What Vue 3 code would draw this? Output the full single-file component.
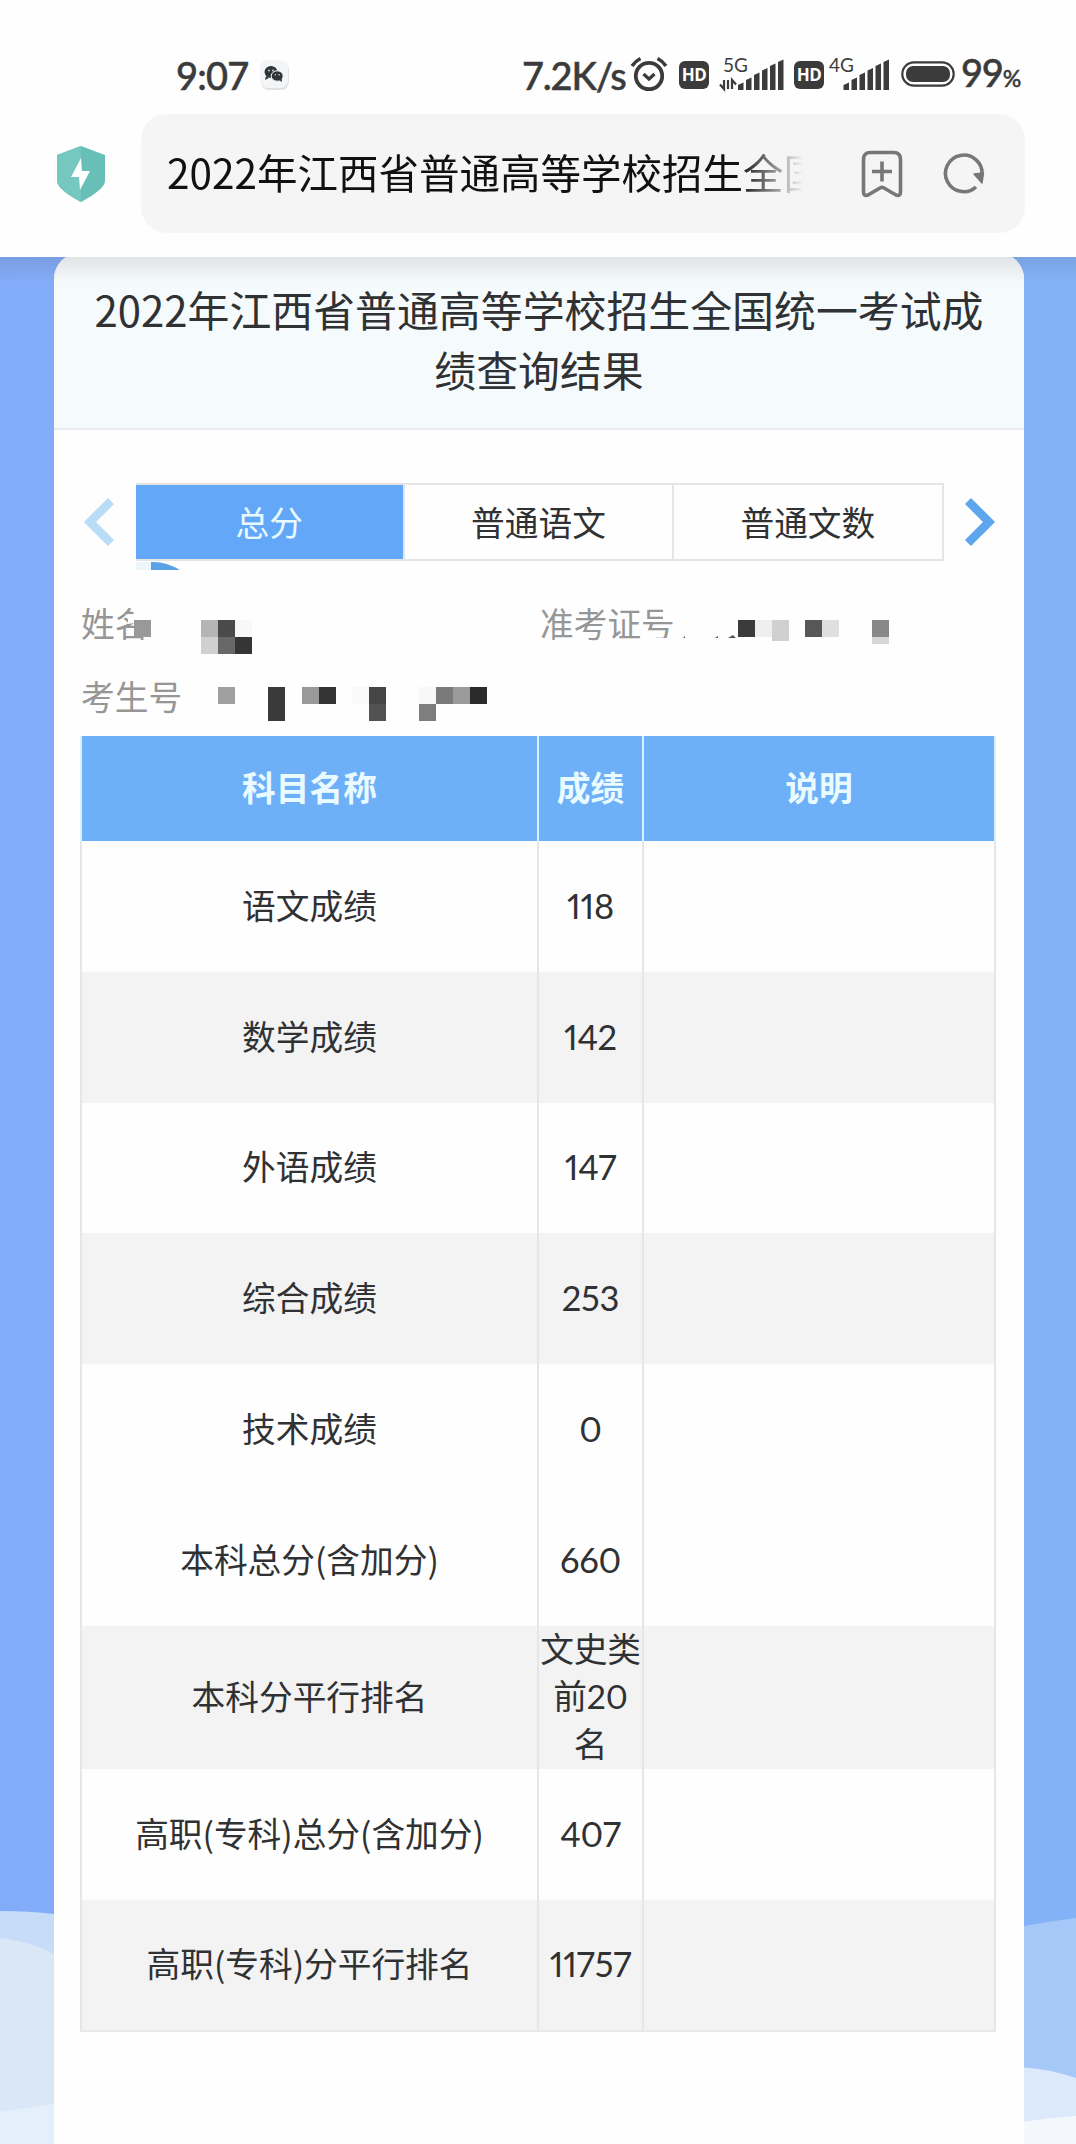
<template>
  <div class="screen">
    <header class="browser">
      <div class="status-bar">
        <span class="time">9:07</span>
        <svg class="wechat" viewBox="0 0 30 31">
          <rect x="1" y="2" width="28" height="28" rx="8" fill="#dfe3e7" />
          <rect x="0" y="0" width="28" height="28" rx="8" fill="#f3f5f7" />
          <ellipse cx="11" cy="12" rx="6.5" ry="6" fill="#2f3437" />
          <path d="M6 16l-1 4 4-2z" fill="#2f3437" />
          <ellipse cx="17.2" cy="16" rx="6" ry="5.2" fill="#2f3437" stroke="#f3f5f7" stroke-width="1" />
          <path d="M19 20l3 2-.5-4z" fill="#2f3437" />
          <circle cx="9" cy="10.5" r=".9" fill="#d5d8da" />
          <circle cx="13" cy="10.5" r=".9" fill="#d5d8da" />
          <circle cx="15.4" cy="14.8" r=".8" fill="#d5d8da" />
          <circle cx="19.2" cy="14.8" r=".8" fill="#d5d8da" />
        </svg>
        <span class="speed">7.2K/s</span>
        <svg class="alarm" viewBox="0 0 38 36" fill="none" stroke="#3b3b3b">
          <circle cx="19" cy="20" r="13.2" stroke-width="3.8" />
          <path d="M13.5 18l5.5 5 5.5-5" stroke-width="3.2" />
          <path d="M2 10q3.5-5 8.5-7.5M36 10q-3.5-5-8.5-7.5" stroke-width="3.6" />
        </svg>
        <span class="hd">HD</span>
        <svg class="signal signal-5g" viewBox="0 0 64 34">
          <text x="3" y="16" class="net">5G</text>
          <path d="M4 24v9l-4-4.500M8 24v9M12 33v-9l4 4.500" fill="none" stroke="#3b3b3b" stroke-width="2.200" />
          <path v-for="(bar, i) in bars" :key="i" :d="bar" transform="translate(18 0)" fill="#3b3b3b" />
        </svg>
        <span class="hd hd-second">HD</span>
        <svg class="signal signal-4g" viewBox="0 0 61 34">
          <text x="0" y="16" class="net">4G</text>
          <path v-for="(bar, i) in bars" :key="i" :d="bar" transform="translate(14.5 0)" fill="#3b3b3b" />
        </svg>
        <svg class="battery" viewBox="0 0 54 26">
          <rect x="1.3" y="1.3" width="51.4" height="23.4" rx="11.7" fill="none" stroke="#3b3b3b" stroke-width="2.2" />
          <rect x="5" y="5" width="44" height="16" rx="7" fill="#3b3b3b" />
        </svg>
        <span class="level">99<small>%</small></span>
      </div>

      <div class="toolbar">
        <svg class="shield" viewBox="0 0 50 58">
          <path d="M25 1l24 9v26q0 8-24 21Q1 44 1 36V10z" fill="#67bfb7" />
          <path d="M25 1L1 10v26q0 8 24 21z" fill="#76c7bf" />
          <path d="M25 13L15 32h8l1 13 10-19h-8z" fill="#fff" />
        </svg>
        <div class="address">
          <span class="address-text">2022年江西省普通高等学校招生全国</span>
          <svg class="bookmark" viewBox="0 0 42 48" fill="none" stroke="#777" stroke-width="3.6">
            <path d="M9.500 2.500h23q7 0 7 7v32.500q0 4.500-4.500 3L23 38q-2-1.200-4 0L7 45q-4.500 1.500-4.500-3V9.500q0-7 7-7z" stroke-linejoin="round" />
            <path d="M21 11.500v20M11 21.500h20" />
          </svg>
          <svg class="refresh" viewBox="0 0 44 44">
            <path d="M34 35A18.300 18.300 0 1 1 40 23" fill="none" stroke="#777" stroke-width="3.6" />
            <path d="M32 22l9.500-1-1.500 10z" fill="#777" stroke="#777" stroke-width="1.5" stroke-linejoin="round" />
          </svg>
        </div>
      </div>
    </header>

    <main class="content">
      <svg class="clouds" viewBox="0 0 1076 244">
        <path d="M0 11Q30 11 54 14V244H0z" fill="#c6dcf9" />
        <path d="M0 38Q30 41 54 54V244H0z" fill="#dae7f7" />
        <path d="M0 212Q22 208 54 204V244H0z" fill="#e3effa" />
        <path d="M1020 27Q1050 21 1076 18V244H1020z" fill="#a6c8f8" />
        <path d="M1020 167Q1050 169 1076 178V244H1020z" fill="#dce9fb" />
        <path d="M1020 222Q1050 218 1076 216V244H1020z" fill="#f4f8fc" />
      </svg>

      <section class="card">
        <h1 class="title">2022年江西省普通高等学校招生全国统一考试成<br>绩查询结果</h1>

        <nav class="tabs">
          <svg class="arrow" viewBox="0 0 32 50">
            <path d="M28 4L7 25l21 21" fill="none" stroke="#b9dcf7" stroke-width="8.5" />
          </svg>
          <ul class="tab-list">
            <li
              v-for="(tab, i) in tabs"
              :key="tab"
              class="tab"
              :class="{ active: i === current }"
              @click="current = i"
            >{{ tab }}</li>
          </ul>
          <svg class="arrow" viewBox="0 0 32 50">
            <path d="M4 4l21 21L4 46" fill="none" stroke="#5da5ec" stroke-width="8.5" />
          </svg>
        </nav>

        <div class="info">
          <span>姓名</span>
          <span>准考证号</span>
          <span>考生号</span>
          <!-- private values are covered by a mosaic -->
          <svg class="mosaic" viewBox="0 0 970 180">
            <path d="M82 3h15v8H82z" fill="#ebf7fd" />
            <path d="M97 3q14-1 29 8H97z" fill="#5ba2e6" />
            <path d="M76 46h24v34l-6-1-2-2-12-1V64l-6 1v-6l6-4z" fill="#fefefe" />
            <path d="M609 49h14v14h-14zM586 79h50v12h-50z" fill="#fefefe" />
            <rect v-for="(b, i) in blocks" :key="i" :x="b[0]" :y="b[1]" width="17" :height="b[3] || 17" :fill="b[2]" />
            <path d="M629 79h2v-2zM661 79l3-2v2zM674 79l5-3 3 3z" fill="#555" />
          </svg>
        </div>

        <table class="scores">
          <colgroup>
            <col class="col-name">
            <col class="col-score">
            <col class="col-note">
          </colgroup>
          <thead>
            <tr>
              <th>科目名称</th>
              <th>成绩</th>
              <th>说明</th>
            </tr>
          </thead>
          <tbody>
            <tr v-for="row in rows" :key="row.name" :class="{ striped: row.striped, tall: row.tall }">
              <td>{{ row.name }}</td>
              <td class="score">{{ row.score }}</td>
              <td></td>
            </tr>
          </tbody>
        </table>
      </section>
    </main>
  </div>
</template>

<script setup>
import { ref } from 'vue';

const current = ref(0);
const tabs = ['总分', '普通语文', '普通文数'];

const rows = [
  { name: '语文成绩', score: '118' },
  { name: '数学成绩', score: '142', striped: true },
  { name: '外语成绩', score: '147' },
  { name: '综合成绩', score: '253', striped: true },
  { name: '技术成绩', score: '0' },
  { name: '本科总分(含加分)', score: '660' },
  { name: '本科分平行排名', score: '文史类前20名', striped: true, tall: true },
  { name: '高职(专科)总分(含加分)', score: '407' },
  { name: '高职(专科)分平行排名', score: '11757', striped: true }
];

// signal bars, each with a slanted top
const bars = [27, 22, 17, 12.5, 8, 4].map((top, i) => {
  const x = i * 8;
  return `M${x} ${top + 2}l5.5-2.5V34H${x}z`;
});

// x, y, colour, height
const blocks = [
  [80, 61, '#999'],
  [147, 61, '#b5b5b5'], [164, 61, '#4a4a4a'], [181, 61, '#f8f8f8'],
  [147, 78, '#d0d0d0'], [164, 78, '#686868'], [181, 78, '#353535'],
  [164, 128, '#a0a0a0'], [214, 128, '#3a3a3a', 34],
  [248, 128, '#999'], [265, 128, '#333'],
  [298, 128, '#f9f9f9'], [315, 128, '#454545'], [315, 145, '#525252'],
  [365, 128, '#f8f8f8'], [382, 128, '#7a7a7a'], [399, 128, '#9b9b9b'], [416, 128, '#2b2b2b'],
  [365, 145, '#7e7e7e'],
  [684, 61, '#3b3b3b'], [701, 61, '#efefef'], [718, 61, '#d0d0d0', 21],
  [751, 61, '#575757'], [768, 61, '#dfdfdf'],
  [818, 61, '#888'], [818, 78, '#d6d6d6', 7]
];
</script>

<style>
body {
  margin: 0;
  background: #83aff8;
}
</style>

<style scoped>
.screen {
  width: 1076px;
  height: 2144px;
  overflow: hidden;
  display: flex;
  flex-direction: column;
  font-family: "Noto Sans CJK SC", sans-serif;
  color: #303133;
}

.browser {
  height: 257px;
  flex: none;
  background: #fefefe;
}

.status-bar {
  display: flex;
  align-items: center;
  height: 40px;
  padding: 55px 0 19px 176px;
  font-family: Lato, sans-serif;
  font-weight: 500;
  font-size: 38px;
  line-height: 38px;
  color: #3b3b3b;
  white-space: nowrap;
  -webkit-text-stroke: 0.5px #3b3b3b;
}

.status-bar svg,
.hd {
  flex: none;
  -webkit-text-stroke: 0;
}

.time {
  width: 84px;
  letter-spacing: -0.8px;
}

.wechat {
  width: 30px;
  height: 31px;
}

.speed {
  width: 108px;
  margin-left: 232px;
  letter-spacing: -1.2px;
}

.alarm {
  width: 38px;
  height: 36px;
  margin-top: -2px;
}

.hd {
  width: 30px;
  height: 28px;
  margin-left: 11px;
  border-radius: 6px;
  background: #3b3b3b;
  color: #fff;
  font: bold 17px/28px "Open Sans", sans-serif;
  letter-spacing: -0.5px;
  text-align: center;
}

.hd-second {
  margin-left: 10px;
}

.signal {
  height: 34px;
  margin-top: -4px;
  overflow: visible;
}

.signal-5g {
  width: 64px;
  margin-left: 11px;
}

.signal-4g {
  width: 61px;
  margin-left: 5px;
}

.net {
  font: 19px Lato, sans-serif;
  fill: #3b3b3b;
}

.battery {
  width: 54px;
  height: 26px;
  margin-left: 11px;
  margin-top: -2px;
}

.level {
  margin-left: 6px;
  letter-spacing: -1.2px;
}

.level small {
  font-size: 23px;
}

.toolbar {
  display: flex;
  align-items: center;
  gap: 35px;
  padding-left: 56px;
}

.shield {
  width: 50px;
  height: 58px;
}

.address {
  display: flex;
  align-items: center;
  width: 884px;
  height: 119px;
  box-sizing: border-box;
  padding-left: 26px;
  border-radius: 26px;
  background: #f5f5f5;
}

.address-text {
  width: 636px;
  margin-top: -3px;
  overflow: hidden;
  white-space: nowrap;
  font-size: 40.5px;
  line-height: 60px;
  color: #111;
  mask-image: linear-gradient(to right, #000 90%, transparent 100%);
}

.bookmark {
  width: 42px;
  height: 48px;
  margin-left: 58px;
}

.refresh {
  width: 44px;
  height: 44px;
  margin-left: 39px;
}

.content {
  position: relative;
  flex: 1;
  overflow: hidden;
  background: linear-gradient(to right, #83acf8, #83b2f7);
}

/* shade cast by the browser header */
.content::after {
  content: "";
  position: absolute;
  inset: 0 0 auto;
  height: 26px;
  background: linear-gradient(rgba(40, 30, 30, 0.1), transparent);
}

.clouds {
  position: absolute;
  left: 0;
  bottom: 0;
  width: 1076px;
  height: 244px;
}

.card {
  position: relative;
  width: 970px;
  height: 1900px;
  margin: -4px 0 0 54px;
  overflow: hidden;
  border-radius: 26px 26px 0 0;
  background: #fefefe;
}

.title {
  box-sizing: border-box;
  height: 177px;
  margin: 0;
  padding-top: 26px;
  border-bottom: 2px solid #e6ebef;
  background: #f5fafd;
  font-size: 41.9px;
  font-weight: 400;
  line-height: 60px;
  text-align: center;
  white-space: nowrap;
}

.tabs {
  display: flex;
  align-items: center;
  justify-content: space-between;
  height: 78px;
  margin: 53px 28px 0 29px;
}

.arrow {
  width: 32px;
  height: 50px;
}

.tab-list {
  display: flex;
  width: 808px;
  height: 78px;
  margin: 0;
  padding: 0;
  list-style: none;
  box-sizing: border-box;
  border: 2px solid #e4e4e4;
  border-left: 0;
}

.tab {
  flex: 1;
  font-size: 33.7px;
  line-height: 74px;
  text-align: center;
}

.tab + .tab {
  border-left: 2px solid #e4e4e4;
}

.tab.active {
  background: #63a8f8;
  color: #e9faff;
}

.info {
  position: relative;
  display: grid;
  grid-template-columns: 459px 1fr;
  grid-auto-rows: 73px;
  height: 150px;
  padding: 25px 0 0 27px;
  font-size: 33.7px;
  line-height: 73px;
  color: #969696;
}

.mosaic {
  position: absolute;
  left: 0;
  top: -2px;
  width: 970px;
  height: 180px;
}

.scores {
  position: relative;
  width: 916px;
  margin: 0 0 0 26px;
  table-layout: fixed;
  border-collapse: collapse;
  font-size: 33.7px;
  line-height: 48px;
  text-align: center;
}

.col-name {
  width: 457px;
}

.col-score {
  width: 105px;
}

.scores th,
.scores td {
  padding: 0 0 3px;
  border-left: 2px solid #e6e6e6;
  border-right: 2px solid #e6e6e6;
}

.scores th {
  height: 102px;
  background: #6eb0f8;
  border-color: #d7f0fc;
  color: #e9fbff;
  font-weight: 700;
}

.scores tbody tr {
  height: 130.8px;
}

.scores tbody tr.tall {
  height: 143.5px;
}

.striped {
  background: #f3f3f3;
}

.scores tbody tr:last-child {
  border-bottom: 2px solid #e9e9e9;
}

.scores .score {
  padding-bottom: 1px;
  font-family: Lato, "Noto Sans CJK SC", sans-serif;
  font-size: 34.5px;
  font-feature-settings: "pnum";
  letter-spacing: -0.2px;
}

.scores .tall .score {
  font-size: 33.7px;
  line-height: 47.5px;
}
</style>
